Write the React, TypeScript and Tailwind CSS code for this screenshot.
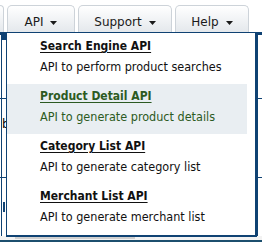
import React from "react";

const Arrow = () => (
  <svg width="7" height="4" viewBox="0 0 7 4" className="ml-[7px] mt-[2px]">
    <polygon points="0,0 7,0 3.5,4" fill="#1a1a1a" />
  </svg>
);

function Tab({ label, w }: { label: string; w: string }) {
  return (
    <div
      className={`${w} h-[27px] rounded-t-[5px] border border-b-0 border-[#cdd3d9] bg-gradient-to-b from-white to-[#e4e8ec] flex items-start justify-center pt-[9px]`}
    >
      <span className="text-[12px] leading-[14px] text-[#1a1a1a]">{label}</span>
      <span className="flex items-center h-[14px]">
        <Arrow />
      </span>
    </div>
  );
}

export default function App() {
  const items = [
    { t: "Search Engine API", d: "API to perform product searches", active: false },
    { t: "Product Detail API", d: "API to generate product details", active: true },
    { t: "Category List API", d: "API to generate category list", active: false },
    { t: "Merchant List API", d: "API to generate merchant list", active: false },
  ];
  return (
    <div className="relative w-[262px] h-[243px] overflow-hidden bg-white font-['DejaVu_Sans',sans-serif]">
      <nav className="flex h-[32px] items-end gap-[3px]">
        <div className="w-[4px] h-[27px] rounded-tr-[5px] border-r border-t border-[#cdd3d9] bg-gradient-to-b from-white to-[#e4e8ec]" />
        <Tab label="API" w="w-[68px]" />
        <Tab label="Support" w="w-[94px]" />
        <Tab label="Help" w="w-[74px]" />
      </nav>

      <div className="flex flex-col">
        <div className="h-[3px] bg-[#0f4273]" />
        <div className="flex h-[64px] border-b border-[#0f4273]">
          <div className="w-[1px] bg-[#0f4273] ml-[1px]" />
          <div className="w-[5px] h-[5px] bg-[#0f4273]" />
          <div className="flex-1" />
          <div className="w-[1px] bg-[#0f4273] mr-[4px]" />
        </div>
        <div className="flex h-[79px] border-b border-[#0f4273]">
          <div className="w-[1px] bg-[#0f4273] ml-[1px]" />
          <div className="flex-1 pt-[18px] text-[12px] leading-[14px] text-black">bl</div>
          <div className="w-[1px] bg-[#0f4273] mr-[4px]" />
        </div>
        <div className="flex h-[58px]">
          <div className="w-[1px] bg-[#0f4273] ml-[1px]" />
          <div className="w-[2px] h-[10px] mt-[24px] ml-[1px] bg-[#0f4273]" />
          <div className="flex-1" />
          <div className="w-[1px] bg-[#0f4273] mr-[4px]" />
        </div>
        <div className="h-[4px] bg-[#f2f2f2] flex">
          <div className="w-[15px]" />
          <div className="w-[120px] h-[3px] bg-[#cfcfcf]" />
        </div>
        <div className="h-[2px] bg-[#1c4f6e]" />
      </div>

      <div className="absolute left-[6px] top-[33px] w-[251px] bg-white border-l border-r-2 border-b-2 border-[#0f4273] pt-[1px] pb-[1px]">
        {items.map((it) => (
          <div
            key={it.t}
            className={`w-[240px] h-[50px] pl-[33px] pt-[4px] ${it.active ? "bg-[#e9eef2] text-[#2c5a22]" : "text-[#111]"}`}
          >
            <div className="font-['DejaVu_Sans_Condensed','DejaVu_Sans',sans-serif] text-[12px] leading-[16px] font-bold underline underline-offset-[2px]">{it.t}</div>
            <div className="mt-[5px] font-['DejaVu_Sans_Condensed','DejaVu_Sans',sans-serif] text-[12.5px] leading-[16px]">{it.d}</div>
          </div>
        ))}
      </div>
    </div>
  );
}
